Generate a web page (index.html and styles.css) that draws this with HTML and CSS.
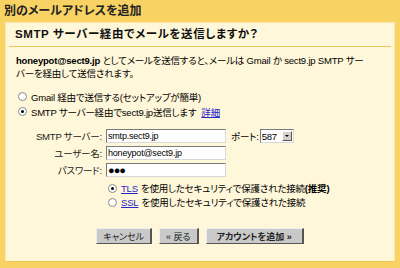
FILE: index.html
```html
<!DOCTYPE html>
<html lang="ja">
<head>
<meta charset="UTF-8">
<title>別のメールアドレスを追加</title>
<link rel="stylesheet" href="styles.css">
</head>
<body>
<div class="page">
    <h1 class="title">別のメールアドレスを追加</h1>
    <div class="panel">
        <div class="panel-head">SMTP サーバー経由でメールを送信しますか？</div>
        <div class="panel-body">
            <p class="desc"><b>honeypot@sect9.jp</b> としてメールを送信すると、メールは Gmail か sect9.jp SMTP サー<br>バーを経由して送信されます。</p>

            <div class="choices">
                <div class="choice"><span class="radio"></span>Gmail 経由で送信する(セットアップが簡単)</div>
                <div class="choice"><span class="radio checked"></span>SMTP サーバー経由でsect9.jp送信します<a class="more" href="#">詳細</a></div>
            </div>

            <div class="form">
                <label>SMTP サーバー:</label>
                <div class="field-row">
                    <div class="input">smtp.sect9.jp</div>
                    <span class="port-label">ポート:</span>
                    <div class="select">587<span class="arrow"></span></div>
                </div>
                <label>ユーザー名:</label>
                <div class="input">honeypot@sect9.jp</div>
                <label>パスワード:</label>
                <div class="input password">●●●</div>
                <div></div>
                <div class="security">
                    <div class="choice"><span class="radio checked"></span><a href="#">TLS</a> を使用したセキュリティで保護された接続<b>(推奨)</b></div>
                    <div class="choice"><span class="radio"></span><a href="#">SSL</a> を使用したセキュリティで保護された接続</div>
                </div>
            </div>

            <div class="buttons">
                <button>キャンセル</button>
                <button>« 戻る</button>
                <button class="primary">アカウントを追加 »</button>
            </div>
        </div>
    </div>
</div>
</body>
</html>
```

FILE: styles.css
```css
body {
    margin: 0;
    background-color: #f9d264;
    font-family: "Liberation Sans", "Noto Sans CJK JP", sans-serif;
    font-size: 9.5px;
    letter-spacing: -0.2px;
    color: #000;
    font-feature-settings: "palt";
}
.page {
    width: 400px;
    height: 268px;
    overflow: hidden;
}
.title {
    margin: 0;
    padding: 3px 0 0 4px;
    height: 19px;
    font-size: 12px;
    line-height: 16px;
    font-weight: bold;
    letter-spacing: 0;
    color: #222;
}
.panel {
    margin: 0 5px;
    height: 238px;
    background-color: #fff7d9;
    border: 1px solid #fbe7a8;
    border-bottom-color: #f0c650;
}
.panel-head {
    margin: 0 3px;
    padding: 5px 6px 5px;
    font-size: 11.5px;
    line-height: 13px;
    font-weight: bold;
    letter-spacing: 0.6px;
    color: #111;
    border-bottom: 1px solid #edc55c;
}
.panel-body {
    padding: 7px 10px 0;
}
.desc {
    margin: 0;
    line-height: 13px;
}
.choices {
    margin-top: 9px;
    padding-left: 2px;
}
.choice {
    display: flex;
    align-items: center;
    height: 15px;
    white-space: nowrap;
}
.radio {
    width: 7px;
    height: 7px;
    margin-right: 4px;
    border: 1px solid #8a8a8a;
    border-radius: 50%;
    background-color: #fff;
    position: relative;
}
.radio.checked::after {
    content: "";
    position: absolute;
    left: 2px;
    top: 2px;
    width: 3px;
    height: 3px;
    border-radius: 50%;
    background-color: #000;
}
a {
    color: #2626c8;
    margin-right: 3px;
}
a.more {
    margin-left: 5px;
}
.form {
    margin-top: 10px;
    display: grid;
    grid-template-columns: 86px auto;
    column-gap: 4px;
    row-gap: 3px;
    align-items: center;
}
.form label {
    text-align: right;
    white-space: nowrap;
    color: #222;
}
.field-row {
    display: flex;
    align-items: center;
    white-space: nowrap;
}
.input {
    width: 117px;
    height: 12px;
    padding-left: 1px;
    line-height: 12px;
    background-color: #fff;
    border: 1px solid;
    border-color: #7a7a7a #d8d8d8 #d8d8d8 #7a7a7a;
    font-size: 9px;
}
.password {
    font-size: 11px;
    letter-spacing: -1px;
}
.port-label {
    margin: 0 1px 0 5px;
}
.select {
    display: flex;
    align-items: center;
    justify-content: space-between;
    width: 31px;
    height: 12px;
    padding-left: 1px;
    background-color: #fff;
    border: 1px solid;
    border-color: #7a7a7a #d8d8d8 #d8d8d8 #7a7a7a;
}
.arrow {
    width: 10px;
    height: 10px;
    margin-right: 1px;
    background-color: #d4d0c8;
    border: 1px solid;
    border-color: #fff #555 #555 #fff;
    box-sizing: border-box;
    position: relative;
}
.arrow::after {
    content: "";
    position: absolute;
    left: 2px;
    top: 3px;
    border-left: 2px solid transparent;
    border-right: 2px solid transparent;
    border-top: 2px solid #000;
}
.security {
    margin-top: 1px;
    padding-left: 2px;
}
.security .choice {
    height: 14px;
}
.buttons {
    display: flex;
    justify-content: center;
    gap: 7px;
    margin-top: 19px;
}
button {
    height: 16px;
    padding: 0 6px;
    font-family: inherit;
    font-size: 9px;
    font-feature-settings: "palt";
    color: #222;
    background-color: #c9c9c9;
    border: 1px solid;
    border-color: #eeeeee #555 #555 #eeeeee;
    border-right-width: 2px;
}
button.primary {
    font-weight: bold;
    padding: 0 10px;
}
```
